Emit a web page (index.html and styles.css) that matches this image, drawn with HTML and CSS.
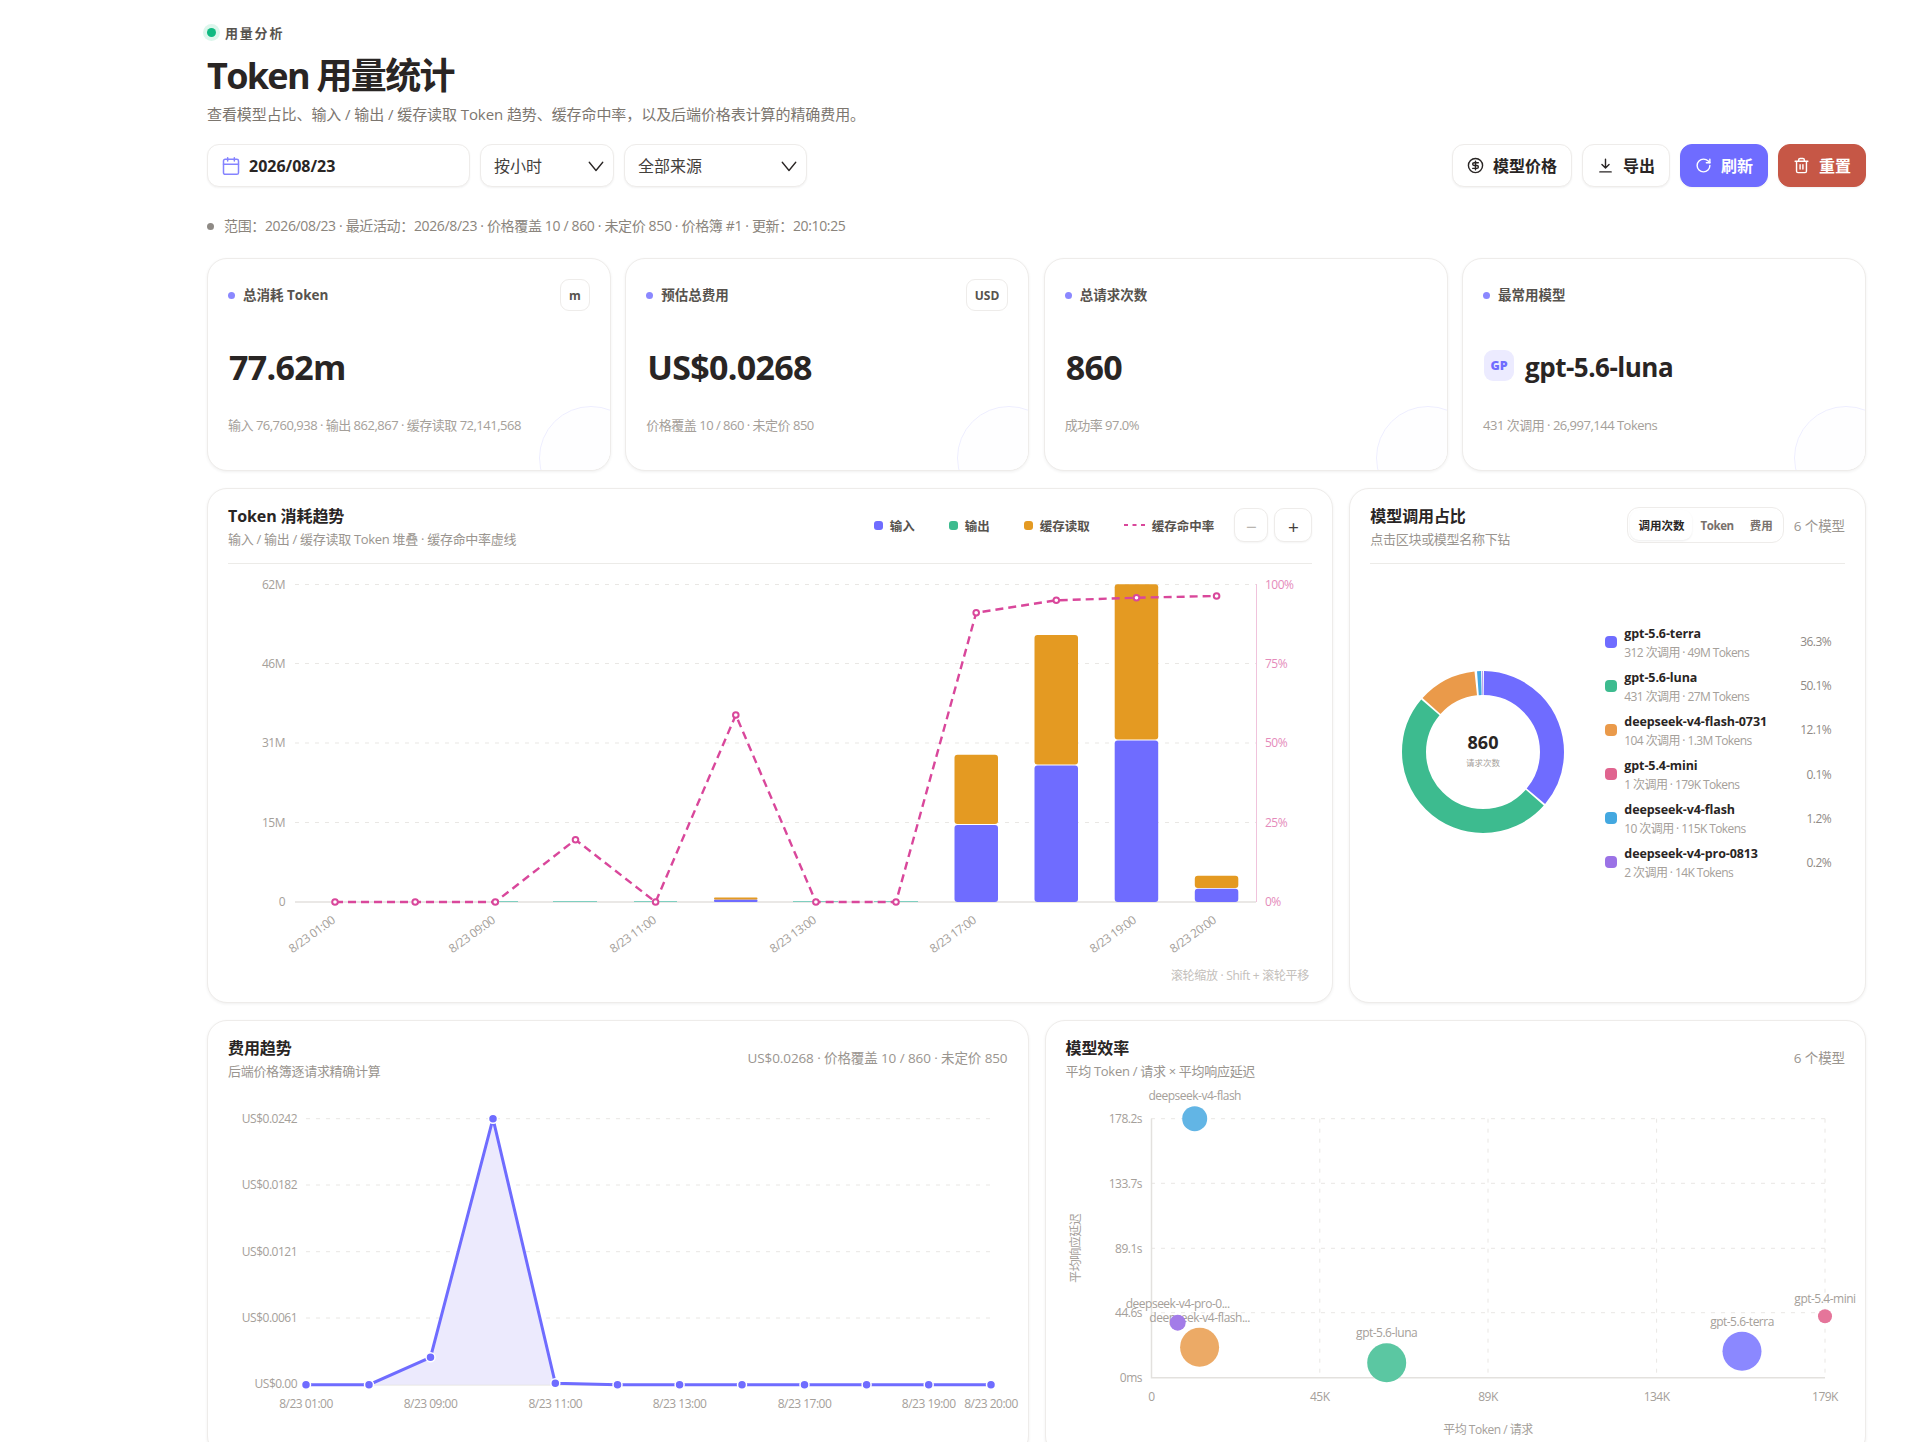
FILE: index.html
```html
<!DOCTYPE html>
<html lang="zh-CN">
<head>
    <meta charset="UTF-8">
    <title>Token 用量统计</title>
    <link rel="stylesheet" href="styles.css">
</head>
<body>
<div class="main-wrapper">

    <div class="eyebrow"><span class="eyebrow-dot"></span>用量分析</div>
    <h1 class="page-title">Token 用量统计</h1>
    <p class="page-sub">查看模型占比、输入 / 输出 / 缓存读取 Token 趋势、缓存命中率，以及后端价格表计算的精确费用。</p>

    <div class="toolbar">
        <div class="filters">
            <div class="control date-control">
                <svg class="ico ico-cal" viewBox="0 0 24 24"><rect x="3" y="4" width="18" height="18" rx="2"/><path d="M16 2v4M8 2v4M3 10h18"/></svg>
                <span>2026/08/23</span>
            </div>
            <div class="control select-control hour-select">
                <span>按小时</span>
                <svg class="ico ico-chev" viewBox="0 0 24 24"><path d="M3 7l9 11 9-11"/></svg>
            </div>
            <div class="control select-control source-select">
                <span>全部来源</span>
                <svg class="ico ico-chev" viewBox="0 0 24 24"><path d="M3 7l9 11 9-11"/></svg>
            </div>
        </div>
        <div class="actions">
            <button class="btn btn-price">
                <svg class="ico" viewBox="0 0 24 24"><circle cx="12" cy="12" r="10"/><path d="M16 8h-6a2 2 0 1 0 0 4h4a2 2 0 1 1 0 4H8M12 18V6"/></svg>
                <span>模型价格</span>
            </button>
            <button class="btn btn-export">
                <svg class="ico" viewBox="0 0 24 24"><path d="M12 3v12M7 10.500l5 5 5-5M4 21h16"/></svg>
                <span>导出</span>
            </button>
            <button class="btn btn-primary">
                <svg class="ico" viewBox="0 0 24 24"><path d="M21 12a9 9 0 1 1-9-9c2.520 0 4.930 1 6.740 2.740L21 8"/><path d="M21 3v5h-5"/></svg>
                <span>刷新</span>
            </button>
            <button class="btn btn-danger">
                <svg class="ico" viewBox="0 0 24 24"><path d="M3 6h18M19 6v14c0 1-1 2-2 2H7c-1 0-2-1-2-2V6M8 6V4c0-1 1-2 2-2h4c1 0 2 1 2 2v2M10 11v6M14 11v6"/></svg>
                <span>重置</span>
            </button>
        </div>
    </div>

    <div class="status-line"><span class="status-dot"></span>范围：2026/08/23 · 最近活动：2026/8/23 · 价格覆盖 10 / 860 · 未定价 850 · 价格簿 #1 · 更新：20:10:25</div>

    <div class="kpi-row">
        <div class="card kpi-card">
            <div class="kpi-head">
                <span class="kpi-label">总消耗 Token</span>
                <span class="chip">m</span>
            </div>
            <div class="kpi-value">77.62m</div>
            <div class="kpi-sub">输入 76,760,938 · 输出 862,867 · 缓存读取 72,141,568</div>
        </div>
        <div class="card kpi-card">
            <div class="kpi-head">
                <span class="kpi-label">预估总费用</span>
                <span class="chip">USD</span>
            </div>
            <div class="kpi-value">US$0.0268</div>
            <div class="kpi-sub">价格覆盖 10 / 860 · 未定价 850</div>
        </div>
        <div class="card kpi-card">
            <div class="kpi-head">
                <span class="kpi-label">总请求次数</span>
            </div>
            <div class="kpi-value">860</div>
            <div class="kpi-sub">成功率 97.0%</div>
        </div>
        <div class="card kpi-card">
            <div class="kpi-head">
                <span class="kpi-label">最常用模型</span>
            </div>
            <div class="kpi-value kpi-model"><span class="model-badge">GP</span>gpt-5.6-luna</div>
            <div class="kpi-sub">431 次调用 · 26,997,144 Tokens</div>
        </div>
    </div>

    <div class="chart-row">
        <section class="card panel">
            <div class="panel-head panel-head-line">
                <div>
                    <h2 class="panel-title">Token 消耗趋势</h2>
                    <p class="panel-sub">输入 / 输出 / 缓存读取 Token 堆叠 · 缓存命中率虚线</p>
                </div>
                <div class="panel-tools">
                    <div class="legend">
                        <span class="legend-item"><i class="swatch sw-input"></i>输入</span>
                        <span class="legend-item"><i class="swatch sw-output"></i>输出</span>
                        <span class="legend-item"><i class="swatch sw-cache"></i>缓存读取</span>
                        <span class="legend-item"><svg class="legend-dash" viewBox="0 0 21 4"><path d="M0 2h21"/></svg>缓存命中率</span>
                    </div>
                    <div class="zoom-btns">
                        <button class="zoom-btn zoom-minus">−</button>
                        <button class="zoom-btn zoom-plus">+</button>
                    </div>
                </div>
            </div>
            <svg class="chart token-chart" viewBox="228 564 1084 425" width="1084" height="425">
                <g class="grid">
                    <path d="M295 584.500H1256M295 663.500H1256M295 743H1256M295 822.500H1256"/>
                </g>
                <path class="axis" d="M295 902H1256"/>
                <path class="axis-right" d="M1256.500 584V902"/>
                <g class="tick-label anchor-end">
                    <text x="285" y="588.500">62M</text>
                    <text x="285" y="667.500">46M</text>
                    <text x="285" y="747">31M</text>
                    <text x="285" y="827">15M</text>
                    <text x="285" y="906">0</text>
                </g>
                <g class="tick-label tick-pink">
                    <text x="1265" y="588.500">100%</text>
                    <text x="1265" y="667.500">75%</text>
                    <text x="1265" y="747">50%</text>
                    <text x="1265" y="827">25%</text>
                    <text x="1265" y="906">0%</text>
                </g>
                <path class="thin-line" d="M495 901.500H518M553 901.500H597M634 901.500H677M793 901.500H838M874 901.500H918"/>
                <rect class="bar-input" x="714" y="899.500" width="43.500" height="2.500" rx="1"/>
                <rect class="bar-cache" x="714" y="897.500" width="43.500" height="2" rx="1"/>
                <rect class="bar-input" x="954.500" y="825" width="43.500" height="77" rx="3"/>
                <rect class="bar-cache" x="954.500" y="754.700" width="43.500" height="69.300" rx="3"/>
                <rect class="bar-input" x="1034.500" y="765.500" width="43.500" height="136.500" rx="3"/>
                <rect class="bar-cache" x="1034.500" y="635" width="43.500" height="129.500" rx="3"/>
                <rect class="bar-input" x="1114.700" y="740.500" width="43.500" height="161.500" rx="3"/>
                <rect class="bar-cache" x="1114.700" y="584.300" width="43.500" height="155.200" rx="3"/>
                <rect class="bar-input" x="1194.800" y="888.700" width="43.500" height="13.300" rx="3"/>
                <rect class="bar-cache" x="1194.800" y="875.700" width="43.500" height="12.300" rx="3"/>
                <polyline class="hit-line" points="335,902 415.200,902 495.300,902 575.500,839.700 655.600,902 735.800,715 815.900,902 896,902 976.200,612.700 1056.300,600.300 1136.500,597.700 1216.600,596"/>
                <g class="hit-dots">
                    <circle cx="335" cy="902" r="2.800"/><circle cx="415.200" cy="902" r="2.800"/><circle cx="495.300" cy="902" r="2.800"/>
                    <circle cx="575.500" cy="839.700" r="2.800"/><circle cx="655.600" cy="902" r="2.800"/><circle cx="735.800" cy="715" r="2.800"/>
                    <circle cx="815.900" cy="902" r="2.800"/><circle cx="896" cy="902" r="2.800"/><circle cx="976.200" cy="612.700" r="2.800"/>
                    <circle cx="1056.300" cy="600.300" r="2.800"/><circle cx="1136.500" cy="597.700" r="2.800"/><circle cx="1216.600" cy="596" r="2.800"/>
                </g>
                <g class="tick-label anchor-end">
                    <text x="336" y="922" transform="rotate(-36 336 922)">8/23 01:00</text>
                    <text x="496" y="922" transform="rotate(-36 496 922)">8/23 09:00</text>
                    <text x="657" y="922" transform="rotate(-36 657 922)">8/23 11:00</text>
                    <text x="817" y="922" transform="rotate(-36 817 922)">8/23 13:00</text>
                    <text x="977" y="922" transform="rotate(-36 977 922)">8/23 17:00</text>
                    <text x="1137" y="922" transform="rotate(-36 1137 922)">8/23 19:00</text>
                    <text x="1217" y="922" transform="rotate(-36 1217 922)">8/23 20:00</text>
                </g>
                <text class="chart-hint" x="1309" y="980">滚轮缩放 · Shift + 滚轮平移</text>
            </svg>
        </section>

        <section class="card panel">
            <div class="panel-head panel-head-line">
                <div>
                    <h2 class="panel-title">模型调用占比</h2>
                    <p class="panel-sub">点击区块或模型名称下钻</p>
                </div>
                <div class="panel-tools">
                    <div class="segmented">
                        <span class="seg-tab seg-active">调用次数</span>
                        <span class="seg-tab seg-latin">Token</span>
                        <span class="seg-tab">费用</span>
                    </div>
                    <span class="panel-note">6 个模型</span>
                </div>
            </div>
            <div class="share-body">
                <div class="donut-box">
                    <svg class="donut" viewBox="-81 -81 162 162" width="162" height="162">
                        <g transform="rotate(-90)">
                            <circle class="seg-input" r="69" pathLength="100" stroke-dasharray="35.900 64.100" stroke-dashoffset="-0.200"/>
                            <circle class="seg-output" r="69" pathLength="100" stroke-dasharray="49.700 50.300" stroke-dashoffset="-36.500"/>
                            <circle class="seg-cache" r="69" pathLength="100" stroke-dasharray="11.700 88.300" stroke-dashoffset="-86.600"/>
                            <circle class="seg-blue" r="69" pathLength="100" stroke-dasharray="0.800 99.200" stroke-dashoffset="-98.800"/>
                            <circle class="seg-violet" r="69" pathLength="100" stroke-dasharray="0.150 99.850" stroke-dashoffset="-99.780"/>
                        </g>
                        <text class="donut-num" y="-3">860</text>
                        <text class="donut-cap" y="13.500">请求次数</text>
                    </svg>
                </div>
                <ul class="model-list">
                    <li class="model-row">
                        <i class="model-swatch sw-input"></i>
                        <div class="model-text"><div class="model-name">gpt-5.6-terra</div><div class="model-meta">312 次调用 · 49M Tokens</div></div>
                        <span class="model-pct">36.3%</span>
                    </li>
                    <li class="model-row">
                        <i class="model-swatch sw-output"></i>
                        <div class="model-text"><div class="model-name">gpt-5.6-luna</div><div class="model-meta">431 次调用 · 27M Tokens</div></div>
                        <span class="model-pct">50.1%</span>
                    </li>
                    <li class="model-row">
                        <i class="model-swatch sw-orange"></i>
                        <div class="model-text"><div class="model-name">deepseek-v4-flash-0731</div><div class="model-meta">104 次调用 · 1.3M Tokens</div></div>
                        <span class="model-pct">12.1%</span>
                    </li>
                    <li class="model-row">
                        <i class="model-swatch sw-pink"></i>
                        <div class="model-text"><div class="model-name">gpt-5.4-mini</div><div class="model-meta">1 次调用 · 179K Tokens</div></div>
                        <span class="model-pct">0.1%</span>
                    </li>
                    <li class="model-row">
                        <i class="model-swatch sw-blue"></i>
                        <div class="model-text"><div class="model-name">deepseek-v4-flash</div><div class="model-meta">10 次调用 · 115K Tokens</div></div>
                        <span class="model-pct">1.2%</span>
                    </li>
                    <li class="model-row">
                        <i class="model-swatch sw-violet"></i>
                        <div class="model-text"><div class="model-name">deepseek-v4-pro-0813</div><div class="model-meta">2 次调用 · 14K Tokens</div></div>
                        <span class="model-pct">0.2%</span>
                    </li>
                </ul>
            </div>
        </section>
    </div>

    <div class="bottom-row">
        <section class="card panel">
            <div class="panel-head">
                <div>
                    <h2 class="panel-title">费用趋势</h2>
                    <p class="panel-sub">后端价格簿逐请求精确计算</p>
                </div>
                <span class="panel-note panel-note-up">US$0.0268 · 价格覆盖 10 / 860 · 未定价 850</span>
            </div>
            <svg class="chart cost-chart" viewBox="228 1081 780 361" width="780" height="361">
                <g class="grid">
                    <path d="M306 1118.700H991M306 1185H991M306 1251.700H991M306 1318H991"/>
                </g>
                <path class="axis" d="M306 1384.700H991"/>
                <g class="tick-label anchor-end">
                    <text x="297" y="1123">US$0.0242</text>
                    <text x="297" y="1189">US$0.0182</text>
                    <text x="297" y="1256">US$0.0121</text>
                    <text x="297" y="1322">US$0.0061</text>
                    <text x="297" y="1388">US$0.00</text>
                </g>
                <polygon class="cost-area" points="369,1384.700 430.500,1357.300 493,1118.700 555.300,1383.300 617.500,1384.700"/>
                <polyline class="cost-line" points="306,1384.700 369,1384.700 430.500,1357.300 493,1118.700 555.300,1383.300 617.500,1384.700 679.600,1384.700 742,1384.700 804.500,1384.700 866.600,1384.700 928.700,1384.700 991,1384.700"/>
                <g class="cost-dots">
                    <circle cx="306" cy="1384.700" r="4.500"/><circle cx="369" cy="1384.700" r="4.500"/><circle cx="430.500" cy="1357.300" r="4.500"/>
                    <circle cx="493" cy="1118.700" r="4.500"/><circle cx="555.300" cy="1383.300" r="4.500"/><circle cx="617.500" cy="1384.700" r="4.500"/>
                    <circle cx="679.600" cy="1384.700" r="4.500"/><circle cx="742" cy="1384.700" r="4.500"/><circle cx="804.500" cy="1384.700" r="4.500"/>
                    <circle cx="866.600" cy="1384.700" r="4.500"/><circle cx="928.700" cy="1384.700" r="4.500"/><circle cx="991" cy="1384.700" r="4.500"/>
                </g>
                <g class="tick-label anchor-mid">
                    <text x="306" y="1408">8/23 01:00</text>
                    <text x="430.500" y="1408">8/23 09:00</text>
                    <text x="555.300" y="1408">8/23 11:00</text>
                    <text x="679.600" y="1408">8/23 13:00</text>
                    <text x="804.500" y="1408">8/23 17:00</text>
                    <text x="928.700" y="1408">8/23 19:00</text>
                    <text x="991" y="1408">8/23 20:00</text>
                </g>
            </svg>
        </section>

        <section class="card panel">
            <div class="panel-head">
                <div>
                    <h2 class="panel-title">模型效率</h2>
                    <p class="panel-sub">平均 Token / 请求 × 平均响应延迟</p>
                </div>
                <span class="panel-note panel-note-up">6 个模型</span>
            </div>
            <svg class="chart scatter-chart" viewBox="1066 1081 779 361" width="779" height="361">
                <g class="grid">
                    <path d="M1151 1118.700H1825M1151 1183.300H1825M1151 1248.300H1825M1151 1312.700H1825M1319.800 1118.700V1377.700M1488 1118.700V1377.700M1656.600 1118.700V1377.700M1825 1118.700V1377.700"/>
                </g>
                <path class="axis" d="M1151.500 1118.700V1377.700H1825"/>
                <g class="tick-label anchor-end">
                    <text x="1142" y="1123">178.2s</text>
                    <text x="1142" y="1188">133.7s</text>
                    <text x="1142" y="1252.500">89.1s</text>
                    <text x="1142" y="1317">44.6s</text>
                    <text x="1142" y="1381.500">0ms</text>
                </g>
                <g class="tick-label anchor-mid">
                    <text x="1151.500" y="1401">0</text>
                    <text x="1319.800" y="1401">45K</text>
                    <text x="1488" y="1401">89K</text>
                    <text x="1656.600" y="1401">134K</text>
                    <text x="1825" y="1401">179K</text>
                    <text x="1488" y="1433.500">平均 Token / 请求</text>
                    <text x="1080" y="1248.300" transform="rotate(-90 1080 1248.300)">平均响应延迟</text>
                    <text x="1194.700" y="1100">deepseek-v4-flash</text>
                    <text x="1177.700" y="1308">deepseek-v4-pro-0...</text>
                    <text x="1199.600" y="1321.500">deepseek-v4-flash...</text>
                    <text x="1386.700" y="1337">gpt-5.6-luna</text>
                    <text x="1742" y="1325.500">gpt-5.6-terra</text>
                    <text x="1825" y="1303">gpt-5.4-mini</text>
                </g>
                <circle class="bub-blue" cx="1194.700" cy="1118.700" r="12.500"/>
                <circle class="bub-violet" cx="1177.700" cy="1322.700" r="8"/>
                <circle class="bub-orange" cx="1199.600" cy="1347.300" r="19.500"/>
                <circle class="bub-green" cx="1386.700" cy="1362.700" r="19.500"/>
                <circle class="bub-purple" cx="1742" cy="1351.300" r="19.500"/>
                <circle class="bub-pink" cx="1825" cy="1316.300" r="7"/>
            </svg>
        </section>
    </div>

</div>
</body>
</html>
```

FILE: styles.css
```css
html, body {
    height: 100%;
    margin: 0;
    overflow: hidden;
    background: #fff;
}

body {
    font-family: "Open Sans", "Noto Sans CJK SC", sans-serif;
    color: #292524;
}

svg text {
    font-family: "Open Sans", "Noto Sans CJK SC", sans-serif;
}

h1, h2, p, ul {
    margin: 0;
    padding: 0;
}

.main-wrapper {
    padding: 23px 54px 0 207px;
}

/* page header */
.eyebrow {
    display: flex;
    align-items: center;
    height: 18px;
    font-size: 13px;
    font-weight: 700;
    letter-spacing: 1.800px;
    color: #57534e;
}

.eyebrow-dot {
    width: 9px;
    height: 9px;
    margin: 0 9px 0 0;
    border-radius: 50%;
    background: #10b981;
    box-shadow: 0 0 0 4px #dcf6ec;
}

.page-title {
    margin-top: 13px;
    font-size: 36px;
    line-height: 44px;
    font-weight: 700;
    letter-spacing: -1.700px;
    color: #292524;
}

.page-sub {
    margin-top: 5px;
    font-size: 15px;
    line-height: 22px;
    letter-spacing: -0.080px;
    color: #7c766f;
}

.toolbar {
    display: flex;
    justify-content: space-between;
    margin-top: 19px;
}

.filters, .actions {
    display: flex;
    gap: 10px;
}

.control {
    display: flex;
    align-items: center;
    box-sizing: border-box;
    height: 43px;
    border: 1px solid #eeecea;
    border-radius: 12px;
    background: #fff;
    box-shadow: 0 1px 2px rgba(41, 37, 36, 0.06);
    font-size: 16px;
    color: #44403c;
}

.date-control {
    width: 263px;
    padding-left: 13px;
    gap: 8px;
    font-weight: 700;
    color: #292524;
}

.select-control {
    justify-content: space-between;
    padding: 0 8px 2px 13px;
}

.hour-select {
    width: 134px;
}

.source-select {
    width: 183px;
}

.ico {
    width: 17px;
    height: 17px;
    flex: none;
    fill: none;
    stroke: currentColor;
    stroke-width: 2;
    stroke-linecap: round;
    stroke-linejoin: round;
}

.ico-cal {
    width: 20px;
    height: 20px;
    stroke-width: 1.800;
    color: #8583ff;
}

.ico-chev {
    width: 18px;
    height: 18px;
    margin-top: 2px;
    stroke-width: 1.800;
    color: #292524;
}

.btn {
    display: flex;
    align-items: center;
    justify-content: center;
    gap: 9px;
    box-sizing: border-box;
    height: 43px;
    padding: 0;
    border: 1px solid #eeecea;
    border-radius: 12px;
    background: #fff;
    box-shadow: 0 1px 2px rgba(41, 37, 36, 0.06);
    font-family: inherit;
    font-size: 16px;
    font-weight: 700;
    color: #292524;
}

.btn span {
    margin-bottom: 2px;
}

.btn-price {
    width: 120px;
}

.btn-export {
    width: 88px;
}

.btn-primary {
    width: 88px;
    border-color: #6f6cff;
    background: #6f6cff;
    color: #fff;
}

.btn-danger {
    width: 88px;
    border-color: #c65746;
    background: #c65746;
    color: #fff;
}

.status-line {
    display: flex;
    align-items: center;
    margin-top: 29px;
    font-size: 14px;
    line-height: 20px;
    letter-spacing: -0.350px;
    color: #8a847c;
}

.status-dot {
    width: 7px;
    height: 7px;
    margin-right: 10px;
    border-radius: 50%;
    background: #8e8a85;
}

/* cards */
.card {
    position: relative;
    box-sizing: border-box;
    border: 1px solid #eeecea;
    border-radius: 20px;
    background: #fff;
    box-shadow: 0 1px 3px rgba(41, 37, 36, 0.07);
    overflow: hidden;
}

.kpi-row {
    display: grid;
    grid-template-columns: repeat(4, minmax(0, 1fr));
    gap: 14.400px;
    margin-top: 22px;
}

.kpi-card {
    height: 213px;
    padding: 20px;
}

.kpi-card::after {
    content: "";
    position: absolute;
    right: -33px;
    bottom: -40px;
    width: 102px;
    height: 102px;
    border: 1px solid #eeeeff;
    border-radius: 50%;
    background: #fefeff;
}

.kpi-head {
    display: flex;
    align-items: center;
    justify-content: space-between;
    min-height: 32px;
}

.kpi-label {
    display: flex;
    align-items: center;
    padding-bottom: 2px;
    font-size: 13.500px;
    font-weight: 700;
    color: #57534e;
}

.kpi-label::before {
    content: "";
    width: 7px;
    height: 7px;
    margin: 2px 8px 0 0;
    border-radius: 50%;
    background: #8b88ff;
}

.chip {
    box-sizing: border-box;
    min-width: 30px;
    height: 32px;
    padding: 1px 8px 0;
    border: 1px solid #eeecea;
    border-radius: 9px;
    font-size: 12px;
    font-weight: 700;
    line-height: 30px;
    text-align: center;
    color: #57534e;
}

.kpi-value {
    margin: 34px 0 0 1px;
    font-size: 34px;
    line-height: 44px;
    font-weight: 700;
    letter-spacing: -0.700px;
    color: #292524;
}

.kpi-model {
    display: flex;
    align-items: center;
    margin-left: 1px;
    font-size: 26px;
    letter-spacing: -0.500px;
}

.model-badge {
    width: 30px;
    height: 31px;
    margin: -3px 11px 0 0;
    border-radius: 9px;
    background: #ecebff;
    font-size: 12.500px;
    line-height: 31px;
    font-weight: 800;
    letter-spacing: 0;
    text-align: center;
    color: #6f6cff;
}

.kpi-sub {
    position: relative;
    z-index: 1;
    margin-top: 26px;
    font-size: 13px;
    line-height: 20px;
    letter-spacing: -0.500px;
    color: #a5a09a;
}

/* chart panels */
.chart-row {
    display: grid;
    grid-template-columns: minmax(0, 2.18fr) minmax(0, 1fr);
    gap: 16px;
    margin-top: 17px;
}

.bottom-row {
    display: grid;
    grid-template-columns: repeat(2, minmax(0, 1fr));
    gap: 16px;
    margin-top: 17px;
}

.panel {
    padding: 16px 20px 13px;
}

.panel-head {
    display: flex;
    align-items: center;
    justify-content: space-between;
}

.panel-head-line {
    padding-bottom: 14px;
    border-bottom: 1px solid #ecebe8;
}

.panel-title {
    font-size: 16px;
    line-height: 22px;
    font-weight: 700;
    letter-spacing: -0.100px;
    color: #292524;
}

.panel-sub {
    margin-top: 2px;
    font-size: 13px;
    line-height: 20px;
    letter-spacing: -0.300px;
    color: #9a958f;
}

.panel-tools {
    display: flex;
    align-items: center;
    margin-bottom: 4px;
    gap: 10px;
}

.panel-note {
    font-size: 13.500px;
    letter-spacing: -0.100px;
    color: #9a958f;
}

.panel-note-up {
    margin-bottom: 4px;
}

.legend {
    display: flex;
    gap: 34px;
    margin-right: 10px;
}

.legend-item {
    display: flex;
    align-items: center;
    gap: 7px;
    font-size: 12.500px;
    font-weight: 600;
    color: #57534e;
}

.swatch {
    width: 9px;
    height: 9px;
    border-radius: 3px;
}

.legend-dash {
    width: 21px;
    height: 4px;
    fill: none;
    stroke: #d9479b;
    stroke-width: 2;
    stroke-dasharray: 4 4.500;
}

.sw-input { background: #6f6cff; }
.sw-output { background: #3dbb8f; }
.sw-cache { background: #e49a22; }
.sw-orange { background: #ea9a4a; }
.sw-pink { background: #e0648f; }
.sw-blue { background: #43a8e0; }
.sw-violet { background: #9b72e6; }

.zoom-btns {
    display: flex;
    gap: 6px;
}

.zoom-btn {
    box-sizing: border-box;
    height: 34px;
    padding: 3px 0 0;
    border: 1px solid #eeecea;
    border-radius: 10px;
    background: #fff;
    box-shadow: 0 1px 2px rgba(41, 37, 36, 0.05);
    font-family: inherit;
    font-size: 19px;
    line-height: 26px;
    color: #44403c;
}

.zoom-minus {
    width: 34px;
    color: #b9b5b0;
}

.zoom-plus {
    width: 38px;
}

.segmented {
    display: flex;
    box-sizing: border-box;
    height: 36px;
    padding: 2px;
    border: 1px solid #eeecea;
    border-radius: 12px;
}

.seg-tab {
    padding: 1px 8px 0;
    border-radius: 9px;
    font-size: 11.500px;
    font-weight: 700;
    line-height: 29px;
    color: #78716c;
}

.seg-latin {
    letter-spacing: -0.400px;
}

.seg-active {
    background: #fff;
    box-shadow: 0 1px 2px rgba(41, 37, 36, 0.08);
    color: #292524;
}

.chart {
    display: block;
    overflow: visible;
}

.share-body {
    display: grid;
    grid-template-columns: 226px 1fr;
    column-gap: 9px;
    align-items: center;
    height: 376px;
}

.donut-box {
    display: flex;
    justify-content: center;
}

.donut circle {
    fill: none;
    stroke-width: 24;
}

.seg-input { stroke: #6f6cff; }
.seg-output { stroke: #3dbb8f; }
.seg-cache { stroke: #ea9a4a; }
.seg-blue { stroke: #43a8e0; }
.seg-violet { stroke: #9b72e6; }

.donut-num {
    font-size: 18px;
    font-weight: 700;
    text-anchor: middle;
    fill: #292524;
}

.donut-cap {
    font-size: 8.500px;
    text-anchor: middle;
    fill: #a5a09a;
}

.model-list {
    list-style: none;
    padding-right: 14px;
}

.model-row {
    display: flex;
    align-items: center;
    height: 44.200px;
}

.model-swatch {
    flex: none;
    width: 12px;
    height: 12px;
    margin-right: 7px;
    border-radius: 4px;
}

.model-text {
    flex: 1;
    padding-top: 3px;
}

.model-name {
    font-size: 12.500px;
    line-height: 18px;
    font-weight: 700;
    letter-spacing: -0.100px;
    color: #292524;
}

.model-meta {
    margin-top: 1px;
    font-size: 12px;
    line-height: 18px;
    letter-spacing: -0.600px;
    color: #a5a09a;
}

.model-pct {
    font-size: 12px;
    letter-spacing: -0.600px;
    color: #8f8a85;
}

/* svg parts */
.grid path {
    fill: none;
    stroke: #e9e7e4;
    stroke-width: 1;
    stroke-dasharray: 4 6;
}

.axis {
    fill: none;
    stroke: #e3e1de;
    stroke-width: 1.500;
}

.axis-right {
    fill: none;
    stroke: #f0c3dc;
    stroke-width: 1;
}

.tick-label text {
    font-size: 12px;
    letter-spacing: -0.500px;
    fill: #a5a09a;
}

.anchor-end text {
    text-anchor: end;
}

.anchor-mid text {
    text-anchor: middle;
}

.tick-pink text {
    fill: #e58bbb;
}

.thin-line {
    fill: none;
    stroke: #7fcfc0;
    stroke-width: 1;
}

.bar-input { fill: #6f6cff; }
.bar-cache { fill: #e49a22; }

.hit-line {
    fill: none;
    stroke: #d9479b;
    stroke-width: 2.400;
    stroke-dasharray: 8 5;
}

.hit-dots circle {
    fill: #fff;
    stroke: #d9479b;
    stroke-width: 2;
}

.chart-hint {
    font-size: 12px;
    letter-spacing: -0.300px;
    text-anchor: end;
    fill: #c4c0bb;
}

.cost-area {
    fill: #eceafd;
}

.cost-line {
    fill: none;
    stroke: #6f6cff;
    stroke-width: 3;
}

.cost-dots circle {
    fill: #6f6cff;
    stroke: #fff;
    stroke-width: 1.500;
}

.bub-blue { fill: #62b5e5; }
.bub-violet { fill: #a37ce8; }
.bub-orange { fill: #ecaa66; }
.bub-green { fill: #5bc7a2; }
.bub-purple { fill: #8b88ff; }
.bub-pink { fill: #e5759a; }
```
